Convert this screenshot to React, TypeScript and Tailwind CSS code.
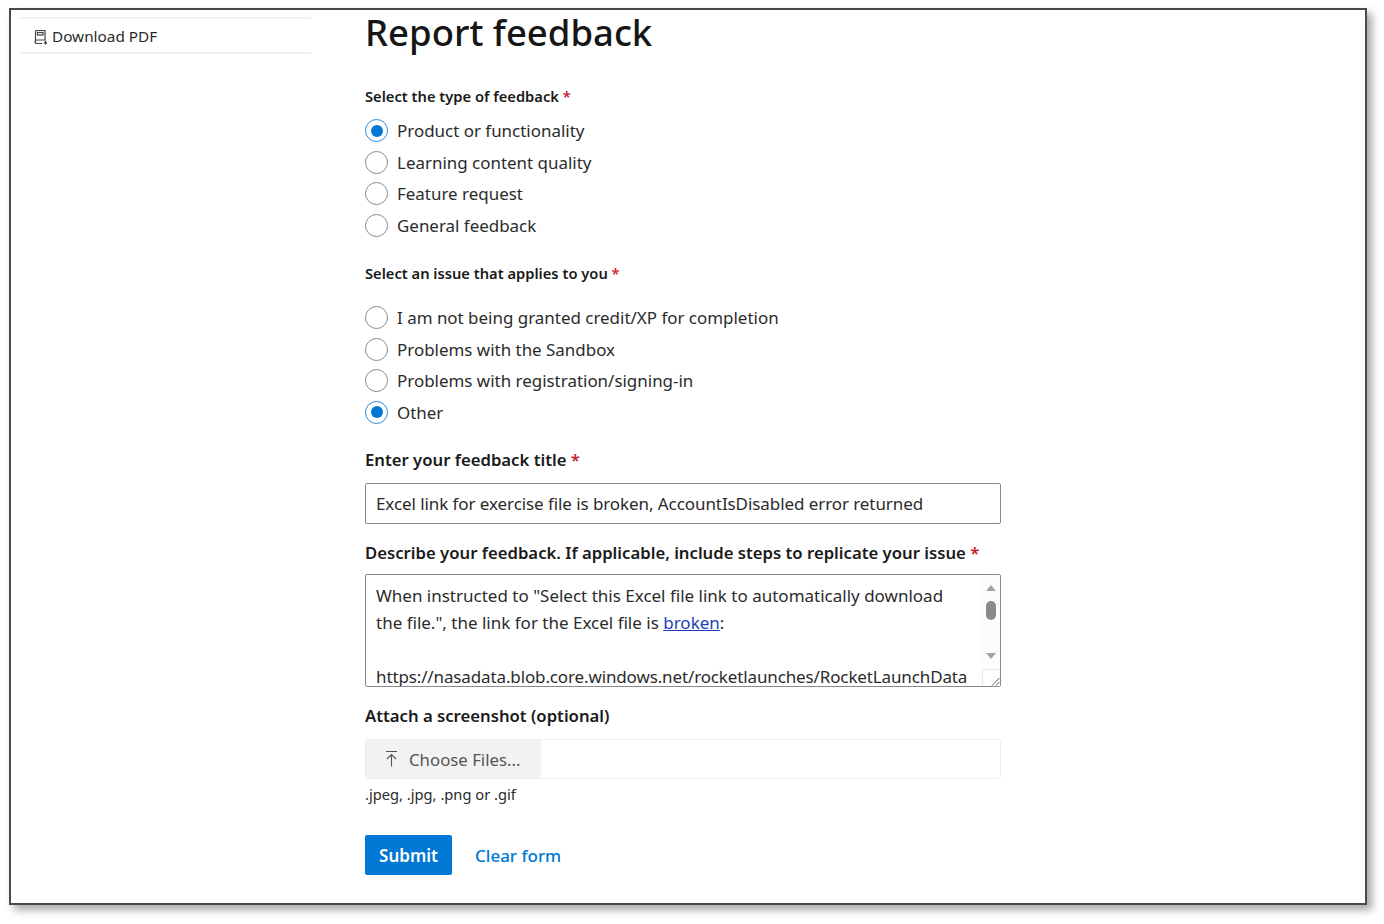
const font = "[font-family:'Noto_Sans','Open_Sans',sans-serif]";

const feedbackTypes = [
  { label: 'Product or functionality', checked: true },
  { label: 'Learning content quality', checked: false },
  { label: 'Feature request', checked: false },
  { label: 'General feedback', checked: false },
];

const issues = [
  { label: 'I am not being granted credit/XP for completion', checked: false },
  { label: 'Problems with the Sandbox', checked: false },
  { label: 'Problems with registration/signing-in', checked: false },
  { label: 'Other', checked: true },
];

function Radio({ label, checked }: { label: string; checked: boolean }) {
  return (
    <div className="flex h-[31.5px] items-center gap-[9px]">
      {checked ? (
        <span className="flex h-[23px] w-[23px] items-center justify-center rounded-full border border-[#2b88d8] bg-white">
          <span className="h-[12px] w-[12px] rounded-full bg-[#0078d4]" />
        </span>
      ) : (
        <span className="h-[23px] w-[23px] rounded-full border border-[#8a8a8a] bg-white" />
      )}
      <span className="pt-[2px] text-[16.95px] leading-none text-[#2b2b2b]">{label}</span>
    </div>
  );
}

function Required() {
  return <span className="text-[#c8202b]"> *</span>;
}

function SmallLabel({ children }: { children: React.ReactNode }) {
  return <div className="text-[14.7px] leading-[20px] font-semibold text-[#1a1a1a]">{children}</div>;
}

function BigLabel({ children }: { children: React.ReactNode }) {
  return <div className="text-[16.7px] leading-[24px] font-semibold text-[#1a1a1a]">{children}</div>;
}

export default function App() {
  return (
    <div className={`h-[924px] w-[1384px] overflow-hidden bg-white pt-2 pl-[9px] ${font}`}>
      <div className="flex h-[897px] w-[1358px] gap-[54px] border-2 border-[#4a4a4a] bg-white pl-[10px] shadow-[5px_5px_8px_rgba(0,0,0,0.35)]">
        <aside className="w-[290px] shrink-0 pt-[7px]">
          <div className="flex h-[37px] items-center gap-[3px] border-y-2 border-[#f1f1f1] pt-[2px] pl-[12px]">
            <svg width="16" height="16" viewBox="0 0 16 16" fill="none" stroke="#444" strokeWidth="1.2">
              <path d="M2.5 13V2.5a1 1 0 0 1 1-1h8.5v9.5H3.8a1.3 1.3 0 0 0 0 3.5H9" />
              <rect x="4.5" y="3.5" width="5.5" height="2.5" />
              <path d="M12.5 11.5v3M11 13.5l1.5 1.5 1.5-1.5" />
            </svg>
            <span className="text-[15.3px] leading-none text-[#2b2b2b]">Download PDF</span>
          </div>
        </aside>

        <main className="w-[636px]">
          <h1 className="h-[76px] text-[36.5px] leading-[44px] font-medium text-[#161616]">Report feedback</h1>
          <SmallLabel>
            Select the type of feedback<Required />
          </SmallLabel>
          <div className="mt-[9px]">
            {feedbackTypes.map((item) => (
              <Radio key={item.label} {...item} />
            ))}
          </div>
          <div className="mt-[22px]">
            <SmallLabel>
              Select an issue that applies to you<Required />
            </SmallLabel>
          </div>
          <div className="mt-[19px]">
            {issues.map((item) => (
              <Radio key={item.label} {...item} />
            ))}
          </div>
          <div className="mt-[20px]">
            <BigLabel>
              Enter your feedback title<Required />
            </BigLabel>
          </div>
          <div className="mt-[11px] flex h-[41px] items-center rounded-[2px] border border-[#8a8a8a] px-[10px] text-[17px] tracking-[-0.08px] text-[#2b2b2b]">
            Excel link for exercise file is broken, AccountIsDisabled error returned
          </div>
          <div className="mt-[17px]">
            <BigLabel>
              Describe your feedback. If applicable, include steps to replicate your issue<Required />
            </BigLabel>
          </div>
          <div className="mt-[9px] flex h-[113px] overflow-hidden rounded-[2px] border border-[#8a8a8a]">
            <div className="flex-1 overflow-hidden pt-[7px] pl-[10px] text-[17px] leading-[27px] whitespace-nowrap text-[#2b2b2b]">
              <div>When instructed to "Select this Excel file link to automatically download</div>
              <div>
                the file.", the link for the Excel file is <span className="text-[#1a3fb5] underline">broken</span>:
              </div>
              <div className="h-[27px]" />
              <div className="tracking-[-0.13px]">https://nasadata.blob.core.windows.net/rocketlaunches/RocketLaunchData</div>
            </div>
            <div className="flex w-[18px] shrink-0 flex-col items-center bg-[#fcfcfc]">
              <div className="flex flex-1 flex-col items-center pt-[10px]">
                <span className="h-0 w-0 border-x-[5px] border-b-[6px] border-x-transparent border-b-[#a3a3a3]" />
                <span className="mt-[10px] h-[19px] w-[10px] rounded-full bg-[#8a8a8a]" />
                <span className="mt-auto mb-[10px] h-0 w-0 border-x-[5px] border-t-[6px] border-x-transparent border-t-[#a3a3a3]" />
              </div>
              <div className="flex h-[17px] w-full items-end justify-end border-t border-l border-[#e8e8e8] bg-white">
                <svg width="10" height="10" viewBox="0 0 10 10" stroke="#555" strokeWidth="1">
                  <path d="M2 9.5 9.5 2M6 9.5 9.5 6" />
                </svg>
              </div>
            </div>
          </div>
          <div className="mt-[17px]">
            <BigLabel>Attach a screenshot (optional)</BigLabel>
          </div>
          <div className="mt-[11px] flex h-[40px] overflow-hidden rounded-[3px] border border-[#efefef]">
            <div className="flex w-[175px] items-center gap-[11px] bg-[#f2f2f2] pt-[2px] pl-[19px] text-[16.8px] text-[#555]">
              <svg width="13" height="18" viewBox="0 0 13 18" fill="none" stroke="#555" strokeWidth="1.1" className="-mt-[2px]">
                <path d="M1 1.5h11M6.5 16.5V4.5M2 9l4.5-4.5L11 9" />
              </svg>
              Choose Files...
            </div>
          </div>
          <div className="mt-[4px] text-[14.7px] leading-[22px] text-[#2b2b2b]">.jpeg, .jpg, .png or .gif</div>
          <div className="mt-[30px] flex items-center gap-[23px]">
            <button className="h-[40px] w-[87px] rounded-[2px] bg-[#0078d4] pt-[2px] text-[17px] font-semibold text-white">Submit</button>
            <span className="pt-[2px] text-[17px] font-medium text-[#0078d4]">Clear form</span>
          </div>
        </main>
      </div>
    </div>
  );
}
